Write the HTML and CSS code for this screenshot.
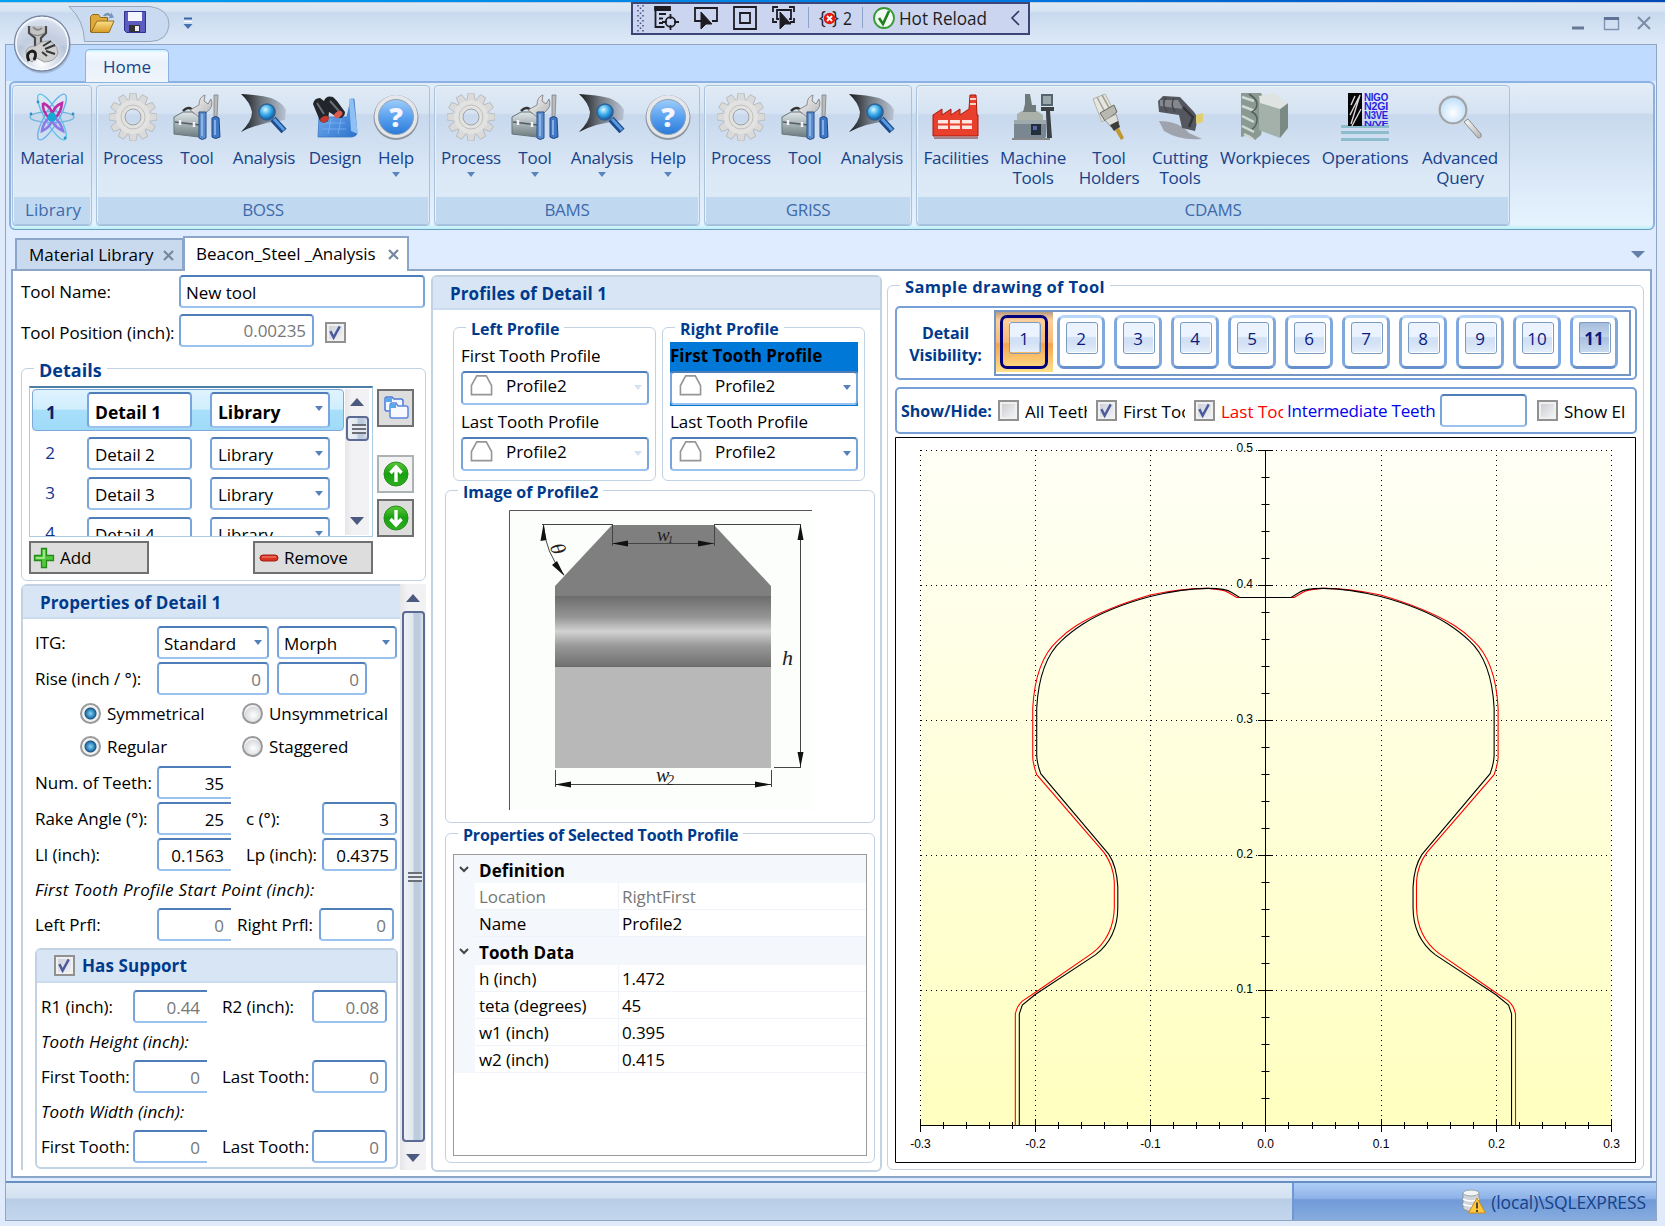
FILE: index.html
```html
<!DOCTYPE html>
<html lang="en">
<head>
<meta charset="utf-8">
<title>Beacon_Steel _Analysis</title>
<link rel="stylesheet" href="styles.css">
</head>
<body>
<svg class="defs" width="0" height="0">
<defs>
<linearGradient id="silver" x1="0" y1="0" x2="1" y2="1"><stop offset="0" stop-color="#fafafa"/><stop offset="1" stop-color="#b4b4b4"/></linearGradient>
<linearGradient id="steel" x1="0" y1="0" x2="0" y2="1"><stop offset="0" stop-color="#dfe6e8"/><stop offset="1" stop-color="#6d7c80"/></linearGradient>
<linearGradient id="blue" x1="0" y1="0" x2="0" y2="1"><stop offset="0" stop-color="#9fccfa"/><stop offset=".5" stop-color="#5ba2f0"/><stop offset="1" stop-color="#2a7ad8"/></linearGradient>
<linearGradient id="horn" x1="0" y1="0" x2="1" y2="0"><stop offset="0" stop-color="#15181c"/><stop offset=".45" stop-color="#6d747c"/><stop offset="1" stop-color="#b9c3d3"/></linearGradient>
<linearGradient id="gold" x1="0" y1="0" x2="0" y2="1"><stop offset="0" stop-color="#fbe08a"/><stop offset="1" stop-color="#d89a26"/></linearGradient>
<linearGradient id="print" x1="0" y1="0" x2="1" y2="1"><stop offset="0" stop-color="#7fb8f4"/><stop offset="1" stop-color="#2c70cc"/></linearGradient>
<radialGradient id="lens" cx=".4" cy=".35" r=".7"><stop offset="0" stop-color="#d8f6ff"/><stop offset=".5" stop-color="#35a8e8"/><stop offset="1" stop-color="#0a4c96"/></radialGradient>
<radialGradient id="glass" cx=".5" cy=".6" r=".6"><stop offset="0" stop-color="#ffffff"/><stop offset="1" stop-color="#b9dcf8"/></radialGradient>
<linearGradient id="green" x1="0" y1="0" x2="0" y2="1"><stop offset="0" stop-color="#5ac83a"/><stop offset=".5" stop-color="#18a010"/><stop offset="1" stop-color="#2fb020"/></linearGradient>
<linearGradient id="band" x1="0" y1="0" x2="0" y2="1"><stop offset="0" stop-color="#6c6c6c"/><stop offset=".3" stop-color="#969696"/><stop offset=".5" stop-color="#d2d2d2"/><stop offset=".7" stop-color="#999"/><stop offset="1" stop-color="#6e6e6e"/></linearGradient>
<linearGradient id="plot" x1="0" y1="0" x2="0" y2="1"><stop offset="0" stop-color="#fffff6"/><stop offset="1" stop-color="#ffffc0"/></linearGradient>
<symbol id="atom" viewBox="0 0 48 48"><g fill="none" stroke-width="1.400"><ellipse cx="24" cy="24" rx="22" ry="5.500" stroke="#6fb7dc"/><ellipse cx="24" cy="24" rx="26" ry="7" transform="rotate(60 24 24)" stroke="#5fc4e6"/><ellipse cx="24" cy="24" rx="26" ry="7" transform="rotate(-60 24 24)" stroke="#6cb2ea"/><path d="M15 10Q24 14 24 22Q26 13 34 10Q33 20 27 25M15 10Q14 18 21 25" stroke="#c02ca8" stroke-width="2.600"/><path d="M21 25Q15 30 14 38Q21 35 24 28Q28 35 35 38Q33 30 27 25" stroke="#8a7ae8" stroke-width="2.600"/></g><circle cx="24" cy="24" r="4.500" fill="#18a6d6"/><g fill="#2e8fc0"><circle cx="3" cy="21" r="1.400"/><circle cx="45" cy="21" r="1.400"/><circle cx="10" cy="9" r="1.400"/><circle cx="37" cy="45" r="1.400"/></g></symbol>
<symbol id="gear" viewBox="0 0 48 48"><g fill="#dadada" stroke="#b0b0b0" stroke-width=".7"><path d="M21 0h6l1.500 10h-9zM21 48h6l1.500-10h-9zM0 21v6l10 1.500v-9zM48 21v6l-10 1.500v-9z"/><path transform="rotate(30 24 24)" d="M21 0h6l1.500 10h-9zM21 48h6l1.500-10h-9zM0 21v6l10 1.500v-9zM48 21v6l-10 1.500v-9z"/><path transform="rotate(60 24 24)" d="M21 0h6l1.500 10h-9zM21 48h6l1.500-10h-9zM0 21v6l10 1.500v-9zM48 21v6l-10 1.500v-9z"/></g><circle cx="24" cy="24" r="12.500" fill="none" stroke="#e2e2e0" stroke-width="9"/><circle cx="24" cy="24" r="8" fill="none" stroke="#a2a2a2" stroke-width="1"/><circle cx="24" cy="24" r="12" fill="none" stroke="#c0c0c0"/></symbol>
<symbol id="tool" viewBox="0 0 48 48"><path d="M1 24l9-5h20v22l-4 3-25-3z" fill="url(#steel)" stroke="#66777a"/><path d="M2 29l25 3" stroke="#4d5d60" stroke-width="1.500"/><path d="M10 18q6-7 12 2" fill="none" stroke="#333" stroke-width="2.500"/><path d="M7 27v5M21 29v5" stroke="#f2f2f2" stroke-width="2.500"/><path d="M17 17l9-5q0-8 6-10l-1 6 4 3 3-5q3 8-4 13l-8 5z" fill="url(#silver)" stroke="#777" stroke-width=".8"/><path d="M26 19h7v26q-4 3-7 0z" fill="#5c8ccc" stroke="#24508e"/><path d="M41 2h4l-1 22h-3z" fill="#bbb" stroke="#777" stroke-width=".7"/><path d="M39 25q4-3 7 0l1 19q-5 3-8 0z" fill="#3f78c4" stroke="#1f4888"/><path d="M29 21v22M42 27v15" stroke="#a4c6f0" stroke-width="1.400"/></symbol>
<symbol id="analysis" viewBox="0 0 48 48"><path d="M1 1Q20 2 31 5Q42 9 46 17L45 27Q18 30 1 39Q12 28 12 19Q10 9 1 1Z" fill="url(#horn)"/><path d="M33 26l11 12" stroke="#1d4a8c" stroke-width="7"/><path d="M34 26l10 11" stroke="#5a9ae0" stroke-width="3"/><circle cx="27" cy="19" r="8" fill="url(#lens)" stroke="#2f5f94" stroke-width="1.500"/></symbol>
<symbol id="design" viewBox="0 0 48 48"><path d="M8 24h28l4-18 3 0 3 34q0 3-5 4H7z" fill="url(#print)" stroke="#3a78c4" stroke-width=".8"/><path d="M38 6l4-1 5 36-7-3z" fill="#8fc0f4"/><path d="M12 30h22M11 36h24M20 26l-3 15M30 26l-3 15" stroke="#77b2f2" stroke-width=".8"/><path d="M2 11q1-6 7-6l4 3q2-6 9-4l4 4 8 11q0 4-4 6l-4-1-8-5-1 9q-4 3-8 0z" fill="#22252a"/><path d="M6 10l7 11M19 8l9 10" stroke="#6a6e75" stroke-width="2"/><ellipse cx="13.500" cy="26" rx="4.500" ry="3" transform="rotate(-25 14 26)" fill="#c43a30"/><ellipse cx="27" cy="21.500" rx="4.500" ry="3" transform="rotate(-35 27 21)" fill="#e05a4c"/></symbol>
<symbol id="help" viewBox="0 0 48 48"><circle cx="24" cy="24.500" r="22.500" fill="#8f969e"/><circle cx="24" cy="23.500" r="21.500" fill="#e4e6ea"/><circle cx="24" cy="24" r="17.500" fill="url(#blue)" stroke="#8fa0b4"/><text x="24" y="33.500" text-anchor="middle" font-family="Open Sans" font-weight="800" font-size="27" fill="#f6f4ff">?</text></symbol>
<symbol id="factory" viewBox="0 0 48 48"><path d="M1 43V22l9-6v6l9-6v6l9-6v6l9-6 1-14h6l1 20h1v21z" fill="#e8402c" stroke="#a8180c"/><path d="M38 6h6M38 11h6" stroke="#fff" stroke-width="1.500"/><g fill="#ffe6e0"><path d="M6 27h10v3.500H6zM18 27h10v3.500H18zM30 27h10v3.500H30zM6 32.500h10V36H6zM18 32.500h10V36H18zM30 32.500h10V36H30z"/></g><path d="M2 45h44" stroke="#7a2820"/></symbol>
<symbol id="machine" viewBox="0 0 48 48"><path d="M5 27h32v17l-4 3H5z" fill="#7b8790"/><path d="M8 21l5-3h15l6 4v6H8z" fill="#a9b1a9"/><path d="M16 1h5l2 11h4v7H14l2-8z" fill="#6f7a7a"/><path d="M33 2h10v10H33z" fill="#9aa7ac" stroke="#56646c" stroke-width="2"/><path d="M32 14h13v4H32zM37 18h4l2 27h-5z" fill="#3c4146"/><path d="M22 31h10v11H22z" fill="#23303c"/><path d="M24 33h4v4h-4z" fill="#56a"/><path d="M5 27h32v4H5z" fill="#9ea9ae"/><path d="M3 45h38v2H3z" fill="#888"/></symbol>
<symbol id="holder" viewBox="0 0 48 48"><path d="M8 6l12-5 10 19-13 9z" fill="#e6e6e0" stroke="#b4b4aa"/><path d="M12 4l10 19M17 2l10 18" stroke="#a4a49c" stroke-width="1.600"/><path d="M15 20l14-8 3 7-12 9z" fill="#b8b8b0" stroke="#66665f"/><path d="M20 27l11-6 3 9-8 4z" fill="#dededa" stroke="#999"/><path d="M25 32l8-4 2 6-6 4z" fill="#3c3c3a"/><path d="M30 37l4-2 5 10-3 2z" fill="#c09830"/></symbol>
<symbol id="cutting" viewBox="0 0 48 48"><path d="M3 28q20 0 30 12l13 6q-22 2-38-8z" fill="#9ea3ae"/><path d="M2 8l5-5 17 1 14 15 4 6-3 13-13-3-3-13-20-3z" fill="#55575e"/><path d="M4 7l18 0 5 9-23-3z" fill="#85878e"/><path d="M10 4q-5 8 1 14M18 5q-4 7 1 14" stroke="#45474c" fill="none" stroke-width="1.500"/><path d="M27 14l10 10-4 10" stroke="#34363a" fill="none" stroke-width="2.500"/><path d="M40 22l7-2v9l-7 2z" fill="#e0cf72"/></symbol>
<symbol id="work" viewBox="0 0 48 48"><path d="M0 0h20l6 10-6 32-6 5-6-5-8 2z" fill="#8a9a92"/><path d="M18 6L47 10l-8 6v29l-21-8z" fill="#a3b1aa"/><path d="M39 16l8-6v25l-8 10z" fill="#7b8b83"/><path d="M18 3L32 0l15 10-8 6-20-6z" fill="#dfe4e2"/><path d="M1 4l12 4M1 13l13 5M1 23l12 6M1 33l12 6M3 41l9 5" stroke="#d0dad4" stroke-width="2.500"/><path d="M8 1q8 5 8 10t-5 8q6 3 5 9t-5 8" stroke="#52615a" stroke-width="1.500" fill="none"/></symbol>
<symbol id="ops" viewBox="0 0 48 48"><path d="M0 32h48v3H0zM0 38h48v3H0zM0 45h48v3H0z" fill="#8dbccc"/><path d="M7 0h14v33H7z" fill="#050505"/><path d="M10 31L19 2M9 22l9-18M11 33l9-17M10 12l4-9" stroke="#d8d8d8" stroke-width="1.400"/><g font-family="Liberation Sans" font-weight="700" font-size="10" fill="#2a20e0"><text x="23" y="7.500" textLength="24" lengthAdjust="spacingAndGlyphs">NIGO</text><text x="23" y="16.500" textLength="24" lengthAdjust="spacingAndGlyphs">N2GI</text><text x="23" y="25.500" textLength="24" lengthAdjust="spacingAndGlyphs">N3VE</text><text x="23" y="33" textLength="24" lengthAdjust="spacingAndGlyphs" font-size="8">N/VF</text></g></symbol>
<symbol id="query" viewBox="0 0 48 48"><path d="M28 29l4-3 13 15q1 4-3 4z" fill="url(#silver)" stroke="#8b8b8b"/><circle cx="17" cy="17" r="13.500" fill="url(#glass)" stroke="#9fa3a8" stroke-width="2.400"/><circle cx="17" cy="17" r="15" fill="none" stroke="#d9dbde"/></symbol>
<symbol id="tooth" viewBox="0 0 24 24"><path d="M1.500 21.500V12L7 2h10l5.500 10v9.500z" fill="#fff" stroke="#969696" stroke-width="1.700"/></symbol>
<symbol id="tick" viewBox="0 0 16 16"><path d="M2.500 6.500L6 13.500 12.500 1.500" fill="none" stroke="#4a5a9c" stroke-width="2.600"/></symbol>
</defs>
</svg>

<div class="window">
  <header class="titlebar">
    <svg class="orb-area" width="210" height="75" viewBox="0 0 210 75">
      <defs><radialGradient id="orb" cx=".5" cy=".85" r=".8"><stop offset="0" stop-color="#fff"/><stop offset=".6" stop-color="#b8c4d8"/><stop offset="1" stop-color="#e6ecf6"/></radialGradient></defs>
      <path d="M69 6.500H150Q169 9 169 24.500Q168 41 150 41.500H84.500Q84 20 69 6.500Z" fill="#cadbf1" stroke="#97a7bf"/>
      <path d="M90.500 32V16.500l2-2h6l2 3h7v5" fill="#e0a93a" stroke="#8e6c1c"/><path d="M91 32.500l6-11.500h17l-5 11.500z" fill="url(#gold)" stroke="#94701c"/><path d="M103 15.500q4-5 8-1v-2.500l3 5.500-6 1 2-2q-3-2-5 0" fill="#7a94b8"/>
      <path d="M124.500 11.500h21v21h-19l-2-2z" fill="#5c5cc0" stroke="#30308c"/><path d="M128 12h14v9h-14z" fill="#f4f6ff"/><path d="M129 25h11v7h-11z" fill="#333"/><path d="M135 26h4v5h-4z" fill="#eee"/>
      <path d="M184 18.500h8" stroke="#3d66a6" stroke-width="2"/><path d="M184 21.500h8" stroke="#fff"/><path d="M183.500 24h9l-4.500 5z" fill="#4772b2"/>
      <circle cx="42.500" cy="45" r="28.500" fill="#8d9bb0" opacity=".55"/><circle cx="42" cy="43.500" r="27.500" fill="url(#orb)" stroke="#7a88a2" stroke-width="1.300"/><circle cx="42" cy="43.500" r="26" fill="none" stroke="#f4f8ff" stroke-width="1.500"/><path d="M17 45a25 25 0 0 1 50 0q-25 6-50 0z" fill="#ccd6e6" opacity=".5"/>
      <path d="M28 26h19v7l-5 6v8h-6v-8l-7-6z" fill="#c4c4c4"/><path d="M29 26v7l6 5v9M46 26v7l-5 5v8" fill="none" stroke="#4a4a4c" stroke-width="2.200"/><path d="M33 27q4 5 9 1" fill="none" stroke="#8a8a8a" stroke-width="2"/><path d="M30 33q7 5 15 0" fill="none" stroke="#777"/>
      <path d="M26 51q2-5 10-5 4-5 13-5 8 3 9 12-3 9-14 9l-7-4-5 4-5-3z" fill="#cfcfce" stroke="#8f9094" stroke-width=".8"/><path d="M43 46l8-5M45 49l10-4M46 51l9 3M42 52l5 4" stroke="#34363a" stroke-width="2"/>
      <path d="M29 61q-4-8 3-10 6 1 2 9" fill="none" stroke="#1c1c1c" stroke-width="2.800"/>
    </svg>
    <div class="debugbar">
      <svg width="399" height="33" viewBox="0 0 399 33">
        <g stroke="#47507f" stroke-width="1.500" stroke-dasharray="1.500 3.500"><path d="M7 3v27"/><path d="M9.500 5.500v24"/><path d="M12 3v27"/></g>
        <g fill="none" stroke="#1c1c22" stroke-width="1.800"><path d="M24.500 9v16h9"/><path d="M24 5h15v3H24z" fill="#1c1c22"/><path d="M28 12h7M28 16.500h4M28 21h4"/><circle cx="39.500" cy="20" r="4.800"/><path d="M39.500 12v5M39.500 23v5M31 20h5M43 20h5"/>
        <path d="M70 19h-6V6h22v13h-5"/><path d="M70 10v17l5-5h6z" fill="#1c1c22" stroke-width="1"/>
        <path d="M103 5h22v22h-22z"/><path d="M109 11h10v10h-10z"/>
        <path d="M142 10V5h5M158 5h5v5M142 16v4h4M163 16v4h-4M148 17h-2V8h14v9h-2"/><path d="M149 10v17l5-5h6z" fill="#1c1c22" stroke-width="1"/></g>
        <path d="M177.500 5v21M231.500 5v21" stroke="#8fa2cc"/>
        <text x="188" y="22" font-family="Open Sans" font-size="18" fill="#222">{</text><text x="201" y="22" font-family="Open Sans" font-size="18" fill="#222">}</text>
        <circle cx="198.500" cy="16.500" r="5.800" fill="#e01b10"/><path d="M196 14l5 5M201 14l-5 5" stroke="#fff" stroke-width="1.800"/>
        <circle cx="253" cy="16" r="10" fill="#f4fbf2" stroke="#379a35" stroke-width="1.800"/><path d="M248 16l4 6 6-13" fill="none" stroke="#1d7f1d" stroke-width="2.600"/>
        <path d="M388 9l-7 7 7 7" fill="none" stroke="#333b66" stroke-width="1.600"/>
        <g font-family="Open Sans" font-size="17.500" fill="#1e1e1e"><text x="212" y="22.500" textLength="9" lengthAdjust="spacingAndGlyphs">2</text><text x="268" y="22.500" textLength="88" lengthAdjust="spacingAndGlyphs">Hot Reload</text></g>
      </svg>
    </div>
    <svg class="winbtns" width="84" height="16" viewBox="0 0 84 16"><path d="M3 12h12" stroke="#667a98" stroke-width="3"/><path d="M35.500 2h14v11.500h-14z" fill="none" stroke="#8194b2" stroke-width="1.400"/><path d="M35 2.500h15" stroke="#5f7494" stroke-width="3"/><path d="M69 1l12 12M81 1L69 13" stroke="#7c8aa4" stroke-width="2"/></svg>
  </header>

  <div class="frame">
    <div class="tabstrip"><div class="hometab">Home</div></div>
    <div class="ribbon">
      <section class="rgroup g1"><div class="items"><div class="item w76"><svg><use href="#atom"/></svg>Material</div></div><footer>Library</footer></section>
      <section class="rgroup g2"><div class="items"><div class="item w66"><svg><use href="#gear"/></svg>Process</div><div class="item w62"><svg><use href="#tool"/></svg>Tool</div><div class="item w72"><svg><use href="#analysis"/></svg>Analysis</div><div class="item w70"><svg><use href="#design"/></svg>Design</div><div class="item w52"><svg><use href="#help"/></svg>Help<i></i></div></div><footer>BOSS</footer></section>
      <section class="rgroup g3"><div class="items"><div class="item w66"><svg><use href="#gear"/></svg>Process<i></i></div><div class="item w62"><svg><use href="#tool"/></svg>Tool<i></i></div><div class="item w72"><svg><use href="#analysis"/></svg>Analysis<i></i></div><div class="item w60"><svg><use href="#help"/></svg>Help<i></i></div></div><footer>BAMS</footer></section>
      <section class="rgroup g4"><div class="items"><div class="item w66"><svg><use href="#gear"/></svg>Process</div><div class="item w62"><svg><use href="#tool"/></svg>Tool</div><div class="item w72"><svg><use href="#analysis"/></svg>Analysis</div></div><footer>GRISS</footer></section>
      <section class="rgroup g5"><div class="items"><div class="item w74"><svg><use href="#factory"/></svg>Facilities</div><div class="item w80"><svg><use href="#machine"/></svg>Machine<br>Tools</div><div class="item w72"><svg><use href="#holder"/></svg>Tool<br>Holders</div><div class="item w70"><svg><use href="#cutting"/></svg>Cutting<br>Tools</div><div class="item w100"><svg><use href="#work"/></svg>Workpieces</div><div class="item w100"><svg><use href="#ops"/></svg>Operations</div><div class="item w90"><svg><use href="#query"/></svg>Advanced<br>Query</div></div><footer>CDAMS</footer></section>
    </div>

    <div class="doctabs">
      <div class="doctab">Material Library<svg width="12" height="12"><path d="M1 1l9 9M10 1l-9 9" stroke="#74889f" stroke-width="2.200"/></svg></div>
      <div class="doctab active">Beacon_Steel _Analysis<svg width="12" height="12"><path d="M1 1l9 9M10 1l-9 9" stroke="#74889f" stroke-width="2.200"/></svg></div>
      <span class="tabmenu"></span>
    </div>

    <main class="doc">
      <div class="left">
        <div class="row top"><label class="l158">Tool Name:</label><div class="field w246 txt">New tool</div></div>
        <div class="row pos"><label class="l158">Tool Position (inch):</label><div class="field w135 off up">0.00235</div><span class="check gap11"><svg><use href="#tick"/></svg></span></div>

        <section class="box details"><h3 class="cap capbig">Details</h3>
          <div class="detailgrid">
            <div class="list">
              <div class="rows">
                <div class="lrow sel"><span>1</span><div class="field txt w105">Detail 1</div><div class="field txt combo w120">Library</div></div>
                <div class="lrow"><span>2</span><div class="field txt w105">Detail 2</div><div class="field txt combo w120">Library</div></div>
                <div class="lrow"><span>3</span><div class="field txt w105">Detail 3</div><div class="field txt combo w120">Library</div></div>
                <div class="lrow"><span>4</span><div class="field txt w105">Detail 4</div><div class="field txt combo w120">Library</div></div>
              </div>
              <div class="vbar"><b class="up"></b><div class="thumb small"></div><b class="down"></b></div>
            </div>
            <div class="side">
              <div class="btn sq"><svg width="26" height="24" viewBox="0 0 26 24"><path d="M2 3q0-2 2-2h5l2 2h7q2 0 2 2v10H4q-2 0-2-2z" fill="#f3f7ff" stroke="#4a78d8" stroke-width="1.500"/><path d="M7 10q0-3 2-3h4l2 3h8q2 0 2 2v8q0 2-2 2H9q-2 0-2-2z" fill="#f6f9ff" stroke="#5c86e0" stroke-width="1.500"/><path d="M2 2h7v4H2zM7 8h6v4H7z" fill="#58a8ec"/></svg></div>
              <div class="btn sq light mt28"><svg width="26" height="26" viewBox="0 0 26 26"><circle cx="13" cy="13" r="12" fill="url(#green)" stroke="#2a8c1c"/><path d="M13 21V7M7.500 12L13 6l5.500 6" fill="none" stroke="#fff" stroke-width="3.400"/></svg></div>
              <div class="btn sq mt6"><svg width="26" height="26" viewBox="0 0 26 26"><circle cx="13" cy="13" r="12" fill="url(#green)" stroke="#2a8c1c"/><path d="M13 5v14M7.500 14l5.500 6 5.500-6" fill="none" stroke="#fff" stroke-width="3.400"/></svg></div>
            </div>
          </div>
          <div class="actions">
            <div class="btn act"><svg width="22" height="22" viewBox="0 0 22 22"><path d="M8.500 1.500h5v7h7v5h-7v7h-5v-7h-7v-5h7z" fill="#52c93c" stroke="#248a18" stroke-width="1.300"/><path d="M11 3v8H3" stroke="#b4f0a0" fill="none" stroke-width="1.500"/></svg>Add</div>
            <div class="btn act rem"><svg width="20" height="22" viewBox="0 0 20 22"><rect x="1" y="8" width="18" height="6" rx="3" fill="#d93420" stroke="#a41c10"/><path d="M3 10h14" stroke="#f59080"/></svg>Remove</div>
          </div>
        </section>

        <div class="propwrap">
          <section class="props">
            <h2 class="head">Properties of Detail 1</h2>
            <div class="form">
              <div class="row"><label class="l122">ITG:</label><div class="field txt combo w112">Standard</div><div class="field txt combo w120 gap8">Morph</div></div>
              <div class="row"><label class="l122">Rise (inch / °):</label><div class="field off w112">0</div><div class="field off w90 gap8">0</div></div>
              <div class="radios"><span class="radio on"></span><label>Symmetrical</label><span class="radio"></span><label>Unsymmetrical</label></div>
              <div class="radios r2"><span class="radio on"></span><label>Regular</label><span class="radio"></span><label>Staggered</label></div>
              <div class="row"><label class="l122">Num. of Teeth:</label><div class="field cut w74">35</div></div>
              <div class="row"><label class="l122">Rake Angle (°):</label><div class="field cut w74">25</div><label class="l76 gap15">c (°):</label><div class="field w75">3</div></div>
              <div class="row"><label class="l122">Ll (inch):</label><div class="field cut w74">0.1563</div><label class="l76 gap15">Lp (inch):</label><div class="field w75">0.4375</div></div>
              <div class="note n1">First Tooth Profile Start Point (inch):</div>
              <div class="row"><label class="l122">Left Prfl:</label><div class="field off cut w74">0</div><label class="l82 gap6">Right Prfl:</label><div class="field off w75">0</div></div>
            </div>
            <section class="support">
              <h2 class="head"><span class="check"><svg><use href="#tick"/></svg></span>Has Support</h2>
              <div class="form">
                <div class="row"><label class="l92">R1 (inch):</label><div class="field off cut w74">0.44</div><label class="l90 gap15">R2 (inch):</label><div class="field off w75">0.08</div></div>
                <div class="note">Tooth Height (inch):</div>
                <div class="row"><label class="l92">First Tooth:</label><div class="field off cut w74">0</div><label class="l90 gap15">Last Tooth:</label><div class="field off w75">0</div></div>
                <div class="note">Tooth Width (inch):</div>
                <div class="row"><label class="l92">First Tooth:</label><div class="field off cut w74">0</div><label class="l90 gap15">Last Tooth:</label><div class="field off w75">0</div></div>
              </div>
            </section>
          </section>
          <div class="vbar tall"><b class="up"></b><div class="thumb"></div><b class="down"></b></div>
        </div>
      </div>

      <section class="middle">
        <h2 class="head">Profiles of Detail 1</h2>
        <div class="pair">
          <section class="box prof"><h3 class="cap">Left Profile</h3>
            <div class="plabel">First Tooth Profile</div><div class="field txt combo dis pick"><svg><use href="#tooth"/></svg>Profile2</div>
            <div class="plabel p2">Last Tooth Profile</div><div class="field txt combo dis pick"><svg><use href="#tooth"/></svg>Profile2</div>
          </section>
          <section class="box prof"><h3 class="cap">Right Profile</h3>
            <div class="hot"><div class="plabel">First Tooth Profile</div><div class="field txt combo pick"><svg><use href="#tooth"/></svg>Profile2</div></div>
            <div class="plabel p2">Last Tooth Profile</div><div class="field txt combo pick"><svg><use href="#tooth"/></svg>Profile2</div>
          </section>
        </div>
        <section class="box image"><h3 class="cap">Image of Profile2</h3>
          <svg width="303" height="300" viewBox="0 0 303 300">
            <path d="M0 0h303v300H0z" fill="#fcfefb"/><path d="M.5 300V.5H303" fill="none" stroke="#555"/>
            <path d="M46 240V76L103 15h102l57 61v165z" fill="#7f7f7f"/><path d="M46 86h216v71H46z" fill="url(#band)"/><path d="M46 157h216v101H46z" fill="#b8b8b8"/><path d="M46 156.500h216" stroke="#6a6a6a"/>
            <g stroke="#444" fill="none"><path d="M33 14.500h70M205 14.500h87M103.500 14v22M205.500 14v22M103 33.500h102M291.500 15v242M265 257.500h27M46.500 260v17M262.500 260v17M46 274.500h216M34.500 15Q36 42 55 65"/></g>
            <g fill="#111"><path d="M103 33.500l16-3v6zM205 33.500l-16-3v6zM291.500 14l-3 16h6zM291.500 257l-3-15h6zM46 274.500l16-3v6zM262 274.500l-16-3v6zM34.500 14l-3 17 6-1zM55.500 66L43 55l5-4z"/></g>
            <g font-family="Liberation Serif" font-style="italic" fill="#222"><text x="148" y="31" font-size="19">w</text><text x="159" y="33" font-size="10">1</text><text x="147" y="272" font-size="20">w</text><text x="158" y="275" font-size="14">2</text><text x="273" y="155" font-size="22">h</text><text transform="translate(48 39) rotate(68)" text-anchor="middle" x="0" y="6" font-size="21">θ</text></g>
          </svg>
        </section>
        <section class="box toothprops"><h3 class="cap capnarrow">Properties of Selected Tooth Profile</h3>
          <div class="pgrid">
            <div class="cat"><svg width="10" height="7"><path d="M1 1l4 4 4-4" fill="none" stroke="#444" stroke-width="2"/></svg>Definition</div>
            <div class="prow faded"><span>Location</span><span>RightFirst</span></div>
            <div class="prow tint"><span>Name</span><span>Profile2</span></div>
            <div class="cat"><svg width="10" height="7"><path d="M1 1l4 4 4-4" fill="none" stroke="#444" stroke-width="2"/></svg>Tooth Data</div>
            <div class="prow"><span>h (inch)</span><span>1.472</span></div>
            <div class="prow"><span>teta (degrees)</span><span>45</span></div>
            <div class="prow"><span>w1 (inch)</span><span>0.395</span></div>
            <div class="prow"><span>w2 (inch)</span><span>0.415</span></div>
          </div>
        </section>
      </section>

      <section class="box right"><h3 class="cap">Sample drawing of Tool</h3>
        <div class="vis"><strong>Detail<br>Visibility:</strong>
          <div class="nums"><div class="num cur"><b>1</b></div><div class="num"><b>2</b></div><div class="num"><b>3</b></div><div class="num"><b>4</b></div><div class="num"><b>5</b></div><div class="num"><b>6</b></div><div class="num"><b>7</b></div><div class="num"><b>8</b></div><div class="num"><b>9</b></div><div class="num"><b>10</b></div><div class="num last"><b>11</b></div></div>
        </div>
        <div class="show"><strong>Show/Hide:</strong><span class="check empty"></span><em>All Teeth</em><span class="check"><svg><use href="#tick"/></svg></span><em>First Tooth</em><span class="check"><svg><use href="#tick"/></svg></span><em class="red">Last Tooth</em><span class="inter">Intermediate Teeth</span><div class="field w87"></div><span class="check empty gap10"></span><em>Show Elements</em></div>
        <svg class="chart" width="741" height="726" viewBox="0 0 741 726">
          <path d="M.5.5h740v725H.5z" fill="#fff" stroke="#000"/>
          <path d="M25.500 13.500h691v675h-691z" fill="url(#plot)"/>
          <g stroke="#000" stroke-dasharray="1 4" fill="none" shape-rendering="crispEdges"><path d="M25.500 13.500H716M25.500 148.500H716M25.500 283.500H716M25.500 418.500H716M25.500 553.500H716M25.500 13V688M140.500 13V688M255.500 13V688M486.500 13V688M601.500 13V688M716.500 13V688"/></g>
          <g fill="#fffff6"><path d="M340 8h19v12h-19z"/><path d="M340 143h19v11h-19z" fill="#ffffea"/><path d="M340 278h19v11h-19z" fill="#ffffe0"/><path d="M340 413h19v11h-19z" fill="#ffffd5"/><path d="M340 548h19v11h-19z" fill="#ffffcb"/></g>
          <g stroke="#000" fill="none"><path d="M370.500 13V688M25.500 688.500H716.500"/>
          <path d="M363 13.500h15M363 148.500h15M363 283.500h15M363 418.500h15M363 553.500h15M366.500 40.500h8M366.500 67.500h8M366.500 94.500h8M366.500 121.500h8M366.500 175.500h8M366.500 202.500h8M366.500 229.500h8M366.500 256.500h8M366.500 310.500h8M366.500 337.500h8M366.500 364.500h8M366.500 391.500h8M366.500 445.500h8M366.500 472.500h8M366.500 499.500h8M366.500 526.500h8M366.500 580.500h8M366.500 607.500h8M366.500 634.500h8M366.500 661.500h8"/>
          <path d="M25.500 682v13M140.500 682v13M255.500 682v13M370.500 682v13M486.500 682v13M601.500 682v13M716.500 682v13M48.500 685v7M71.500 685v7M94.500 685v7M117.500 685v7M163.500 685v7M186.500 685v7M209.500 685v7M232.500 685v7M278.500 685v7M301.500 685v7M324.500 685v7M347.500 685v7M393.500 685v7M417.500 685v7M440.500 685v7M463.500 685v7M509.500 685v7M532.500 685v7M555.500 685v7M578.500 685v7M624.500 685v7M647.500 685v7M670.500 685v7M693.500 685v7"/></g>
          <g transform="translate(-10 -7) scale(.49745 .50766)" fill="none" class="curve">
            <path stroke="#f00" d="M262 1370V1150Q265 1135 276 1125L302 1108L416 1031Q460 998 461 940V890Q459 857 440 832L305 679Q298 660 297 645V548Q302 455 347 415Q365 397 385 385Q440 352 533 325Q600 311 650 312Q680 314 690 320L707 330H765"/>
            <path stroke="#000" d="M270 1370V1150L276 1133L302 1112L423 1034Q468 1000 468 940V900Q466 860 450 836L313 677Q305 655 305 640V548Q310 455 355 415Q370 400 398 382Q450 350 533 328Q600 312 650 312Q685 312 697 320L713 330H765"/>
            <g transform="translate(1529.500 0) scale(-1 1)"><path stroke="#f00" d="M262 1370V1150Q265 1135 276 1125L302 1108L416 1031Q460 998 461 940V890Q459 857 440 832L305 679Q298 660 297 645V548Q302 455 347 415Q365 397 385 385Q440 352 533 325Q600 311 650 312Q680 314 690 320L707 330H765"/>
            <path stroke="#000" d="M270 1370V1150L276 1133L302 1112L423 1034Q468 1000 468 940V900Q466 860 450 836L313 677Q305 655 305 640V548Q310 455 355 415Q370 400 398 382Q450 350 533 328Q600 312 650 312Q685 312 697 320L713 330H765"/></g>
          </g>
          <g font-family="Liberation Sans" font-size="12" fill="#000"><g text-anchor="end"><text x="358" y="15">0.5</text><text x="358" y="151">0.4</text><text x="358" y="286">0.3</text><text x="358" y="421">0.2</text><text x="358" y="556">0.1</text></g><g text-anchor="middle"><text x="25.500" y="711">-0.3</text><text x="140.500" y="711">-0.2</text><text x="255.500" y="711">-0.1</text><text x="370.500" y="711">0.0</text><text x="486" y="711">0.1</text><text x="601.500" y="711">0.2</text><text x="716.500" y="711">0.3</text></g></g>
        </svg>
      </section>
    </main>

    <footer class="status"><div class="server"><svg width="26" height="26" viewBox="0 0 26 26"><path d="M2 4v16q8 5 16 0V4z" fill="#cfd4da" stroke="#8b939c"/><ellipse cx="10" cy="4" rx="8" ry="3" fill="#f2f4f6" stroke="#9aa"/><path d="M2 10q8 4 16 0M2 15q8 4 16 0" fill="none" stroke="#fff" stroke-width="1.500"/><path d="M16 9l8.500 15h-17z" fill="#ffc83c" stroke="#c88a1c"/><path d="M16 13.500v6M16 21v2" stroke="#543" stroke-width="2"/></svg><span>(local)\SQLEXPRESS</span></div></footer>
  </div>
</div>
</body>
</html>
```
FILE: styles.css
```css
* { box-sizing: border-box; }
body { margin: 0; font-family: "Open Sans", "Noto Sans", sans-serif; font-size: 17px; font-stretch: 92%; letter-spacing: -.05px; color: #000; line-height: 20px; white-space: nowrap; }
h2, h3 { margin: 0; font-size: 17px; color: #003a8c; font-weight: 700; letter-spacing: 0; }
em { font-style: normal; }
.defs { position: absolute; }
.window { width: 1665px; height: 1226px; overflow: hidden; background: #dfeafb; display: flex; flex-direction: column; }
.titlebar { height: 44px; position: relative; display: flex; justify-content: space-between; border-top: 2px solid #0078e0; border-image: linear-gradient(90deg, #00a2f4, #0078e0 60%, #0048b8) 2; background: linear-gradient(#9db0c4 0, #dde9f5 1px, #d7e4f2 9px, #c9daee 11px, #dce8f7 40px); }
.orb-area { position: absolute; left: 0; top: 0; z-index: 3; margin-top: -2px; }
.debugbar { margin: 0 0 0 631px; width: 399px; height: 33px; background: #ccd5f0; box-shadow: inset 0 0 0 2px #3d4576; }
.winbtns { margin: 14px 12px 0 0; }
.frame { margin: 0 8px 0 5px; width: 1652px; height: 1177px; border: 1px solid #91a5c0; display: flex; flex-direction: column; background: #dfecff; }
.tabstrip { height: 36px; background: #bfdbff; padding: 4px 0 0 79px; }
.hometab { width: 84px; height: 33px; border: 1px solid #8db2e3; border-bottom: 0; border-radius: 5px 5px 0 0; background: linear-gradient(#c8f4fc 0, #f4faff 3px, #eaf1fa 12px, #f0f5fb); color: #15428b; text-align: center; line-height: 34px; position: relative; z-index: 2; }
.ribbon { margin: 0 1px 0 3px; height: 149px; border: 2px solid #8cb2e4; border-bottom: 1px solid #6f9bc0; border-radius: 6px; padding: 2px 0 0 1px; display: flex; background: linear-gradient(#e3edf8 0, #d7e4f3 30px, #c8d9ed 31px, #dfecfa 110px, #e4f3fe 142px, #b6f2f6); }
.rgroup { height: 140px; border: 1px solid #a9c3dd; border-radius: 4px; margin-right: 4px; display: flex; flex-direction: column; box-shadow: inset 1px 1px #e8f2fa, 0 1px #9fbfdf; background: linear-gradient(#e0eaf5 0, #d5e3f2 27px, #c8d8ed 29px, #dbe8f6 90px, #deebf8); color: #15428b; }
.rgroup footer { height: 27px; background: #c1d8f1; text-align: center; color: #3e6aaa; line-height: 25px; margin: 0 1px; letter-spacing: -.3px; }
.g1 footer { letter-spacing: .1px; padding-left: 2px; }
.items { height: 111px; display: flex; padding: 7px 0 0 3px; }
.g1 .items { padding-left: 1px; }
.item { text-align: center; letter-spacing: -.2px; }
.item svg { display: block; width: 48px; height: 48px; margin: 0 auto 7px; }
.item i { display: block; border: 4px solid transparent; border-top: 5px solid #5b83bd; width: 0; margin: 4px auto 0; }
.g1 { width: 80px; } .g2 { width: 334px; } .g3 { width: 266px; } .g4 { width: 208px; } .g5 { width: 594px; }
.g5 .items { padding-left: 2px; }
.w52 { width: 52px; } .w60 { width: 60px; } .w62 { width: 62px; } .w66 { width: 66px; } .w70 { width: 70px; } .w72 { width: 72px; } .w74 { width: 74px; } .w75 { width: 75px; } .w76 { width: 76px; } .w80 { width: 80px; } .w87 { width: 87px; } .w90 { width: 90px; } .w100 { width: 100px; } .w105 { width: 105px; } .w112 { width: 112px; } .w120 { width: 120px; } .w135 { width: 135px; } .w246 { width: 246px; }
.l76 { width: 76px; } .l82 { width: 82px; } .l90 { width: 90px; } .l92 { width: 92px; } .l122 { width: 122px; } .l158 { width: 158px; }
.gap6 { margin-left: 6px; } .gap8 { margin-left: 8px; } .gap10 { margin-left: 10px; } .gap11 { margin-left: 11px; } .gap15 { margin-left: 15px; }
.doctabs { height: 39px; padding: 7px 0 0 9px; display: flex; align-items: flex-end; }
.doctab { height: 31px; width: 169px; border: 2px solid #8ba6c9; border-bottom: 0; background: #c9daef; padding: 4px 0 0 12px; display: flex; line-height: 22px; }
.doctab svg { margin: 6px 7px 0 auto; }
.doctab.active { width: 226px; height: 35px; background: #fff; margin: 0 0 -2px -1px; position: relative; padding: 5px 0 0 11px; }
.tabmenu { margin: 0 11px 11px auto; border: 7px solid transparent; border-top: 7px solid #6480a8; border-bottom: 0; }
.doc { margin: 0 4px 0 5px; height: 909px; border: 2px solid #8ba6c9; background: #fff; display: flex; }
.left { padding: 4px 0 0 8px; width: 418px; }
.row { height: 33px; margin-bottom: 3px; display: flex; align-items: center; }
.row.top { margin-bottom: 6px; }
.row.pos label { padding-top: 4px; }
.row.pos .check { margin-top: 3px; }
.field { height: 33px; border: 2px solid #7ba6dc; border-color: #4f7db8 #78a5e0 #9cc2ee #78a5e0; border-radius: 4px; background: #fff; text-align: right; line-height: 31px; padding: 0 6px; flex: none; }
.field.txt { text-align: left; padding-left: 5px; }
.field.off { color: #777; }
.field.up { line-height: 29px; }
.field.cut { border-right: 0; border-radius: 4px 0 0 4px; padding-right: 7px; }
.combo { position: relative; }
.combo::after { content: ""; position: absolute; right: 5px; top: 12px; border: 4.500px solid transparent; border-top: 5px solid #5480bc; border-bottom: 0; }
.combo.dis::after { border-top-color: #d5e2f0; }
.check { width: 21px; height: 21px; flex: none; border: 2px solid #919191; background: linear-gradient(135deg, #c8ccd4, #f6f6f8); box-shadow: inset 0 0 0 2px #f0f0f0; display: flex; align-items: center; justify-content: center; }
.check svg { width: 15px; height: 15px; }
.box { border: 1.500px solid #c2d2e3; border-radius: 6px; position: relative; }
.cap { position: absolute; top: -9px; left: 12px; background: #fff; padding: 0 5px; line-height: 20px; font-size: 16px; }
.capbig { font-size: 18px; top: -9px; }
.capnarrow { letter-spacing: -.2px; }
.details { width: 405px; height: 213px; margin-top: 21px; padding: 17px 0 0 7px; }
.detailgrid { display: flex; }
.list { width: 344px; height: 151px; border: 1px solid #a9cbe4; border-top: 2px solid #4d7fa6; display: flex; padding: 1px; }
.rows { flex: 1; overflow: hidden; height: 147px; }
.lrow { display: flex; height: 40px; align-items: center; color: #15428b; margin-left: 1px; }
.lrow span { width: 34px; flex: none; text-align: center; margin-right: 21px; padding-left: 2px; color: #14348c; }
.lrow .field { margin-right: 18px; color: #000; padding-left: 6px; }
.lrow.sel { height: 42px; width: 312px; border: 1px solid #7fa8d8; border-radius: 4px; background: linear-gradient(#dff3fe 0, #d0eefd 48%, #a8dffa 50%, #9fdbf9); font-weight: 700; margin-bottom: 2px; font-size: 17.500px; }
.lrow.sel span { color: #0a2070; margin-right: 20px; padding-top: 3px; }
.lrow.sel .field { height: 36px; line-height: 37px; }
.vbar { width: 24px; flex: none; background: linear-gradient(90deg, #e6e6ea, #f2f2f4 30%); display: flex; flex-direction: column; align-items: center; padding: 9px 0 10px; margin-right: 2px; }
.vbar b { border: 7px solid transparent; border-top: 0; border-bottom: 8px solid #4d5a80; }
.vbar b.down { border-top: 8px solid #4d5a80; border-bottom: 0; margin-top: auto; }
.thumb { width: 23px; border: 2px solid #5c6b94; border-radius: 4px; flex: 1; margin: 7px 0 12px; background: repeating-linear-gradient(#6b7078 0 2px, #e8ecf2 2px 4px) 4px center / 14px 10px no-repeat, linear-gradient(90deg, #eef2f7 0, #e0e7ef 45%, #bccbde 55%, #bccbde 80%, #dce5ef); }
.thumb.small { flex: none; height: 25px; margin: 10px 0 0; }
.side { margin-left: 4px; padding-top: 3px; }
.btn { background: #dddddd; border: 2px solid #707070; display: flex; align-items: center; }
.sq { width: 37px; height: 38px; justify-content: center; }
.sq.light { background: #f2f2f2; border-color: #adb2b5; }
.mt28 { margin-top: 28px; } .mt6 { margin-top: 6px; }
.actions { display: flex; justify-content: space-between; width: 344px; margin-top: 4px; }
.act { width: 120px; height: 33px; padding-left: 2px; gap: 5px; }
.act.rem { padding-left: 4px; }
.propwrap { display: flex; margin-top: 3px; height: 586px; }
.props { width: 379px; border: solid #c2d2e3; border-width: 2px 0 0 2px; border-radius: 6px 0 0 0; }
.head { height: 33px; background: #d8e5f4; border-bottom: 2px solid #cbdcee; line-height: 33px; padding-left: 17px; letter-spacing: .1px; }
.form { padding: 7px 0 0 12px; }
.radios { height: 30px; display: flex; align-items: center; margin: 3px 0 0 45px; }
.radios label { width: 135px; flex: none; margin-left: 6px; padding-top: 2px; }
.radios.r2 { margin-bottom: 5px; }
.radio { width: 21px; height: 21px; flex: none; border-radius: 50%; border: 2px solid #9a9a9a; background: radial-gradient(circle at 55% 60%, #fff, #d8dade 60%, #f4f4f4 64%); }
.radio.on { background: radial-gradient(circle at 50% 50%, #8fd0ee 0, #3f9bcc 3px, #1d5688 5.500px, #1d568800 6.500px), #f2f2f2; }
.note { font-style: italic; height: 37px; line-height: 37px; font-stretch: 100%; letter-spacing: .1px; }
.support { margin: 2px 0 0 12px; width: 363px; height: 221px; border: 2px solid #c2d2e3; border-radius: 6px; }
.props > .form { height: 327px; }
.support .form { padding: 7px 0 0 4px; }
.support .head { display: flex; align-items: center; gap: 7px; }
.support .row { margin: 0; }
.n1 { margin-top: -3px; letter-spacing: .35px; }
.tall { margin-left: 0; width: 26px; padding: 10px 0 8px; }
.tall .thumb { margin: 9px 0 12px; }
.middle { margin: 4px 0 0; width: 451px; height: 897px; border: 2px solid #c2d2e3; border-radius: 6px; }
.pair { display: flex; gap: 6px; margin: 17px 0 0 20px; }
.prof { width: 203px; height: 154px; padding: 14px 0 0 7px; }
.plabel { height: 29px; line-height: 27px; }
.plabel.p2 { height: 32px; line-height: 33px; }
.pick { width: 188px; height: 34px; display: flex; line-height: 26px; gap: 13px; }
.field.pick { padding-left: 7px; }
.pick svg { width: 23px; height: 23px; margin-top: 1px; flex: none; }
.hot { background: #0078d7; width: 188px; height: 64px; font-weight: 700; letter-spacing: 0; }
.hot .field { font-weight: 400; letter-spacing: -.1px; }
.hot + .plabel { margin-top: -1px; }
.image { margin: 9px 0 0 12px; width: 430px; height: 333px; padding: 19px 0 0 63px; }
.image svg { display: block; }
.toothprops { margin: 10px 0 0 12px; width: 430px; height: 330px; padding: 20px 0 0 7px; }
.pgrid { width: 414px; height: 302px; border: 1px solid #9a9a9a; }
.cat { height: 28px; background: #f4f7fc; font-weight: 700; line-height: 32px; display: flex; letter-spacing: .1px; }
.cat svg { margin: 11px 10px 0 5px; }
.prow { display: flex; border-left: 21px solid #f4f7fc; height: 27px; line-height: 28px; }
.prow span { border: 0 solid #f0f4fa; border-width: 0 1px 1px 0; width: 144px; padding-left: 4px; letter-spacing: -.1px; }
.prow span + span { flex: 1; border-right: 0; padding-left: 3px; }
.prow.tint span:first-child { background: #f4f7fc; }
.faded { color: #777; }
.right { margin: 14px 0 0 5px; width: 757px; height: 885px; padding: 20px 0 0 7px; }
.right .cap { top: -9px; font-size: 16.500px; letter-spacing: .35px; left: 12px; }
.vis, .show { width: 742px; height: 74px; border: 2px solid #77a0d6; border-radius: 5px; display: flex; }
.right strong { color: #003a8c; font-size: 16px; letter-spacing: -.1px; }
.vis strong { width: 97px; text-align: center; line-height: 22px; padding-top: 14px; }
.nums { width: 637px; height: 66px; margin-top: 2px; border: 2px solid #7396c4; display: flex; }
.num { width: 57px; height: 60px; padding: 3px 4px 0; }
.num b { display: block; width: 48px; height: 54px; border: 3px solid #7da3d8; border-color: #b8d6fa #7fa8de #6690cc; border-radius: 7px; font-weight: 400; color: #0a1a80; text-align: center; line-height: 42px; background: linear-gradient(#eaf3ff 0 48%, #d2e1f5 52% 70%, #e5effb) 6px 4px / 30px 30px no-repeat; position: relative; }
.num b::after { content: ""; position: absolute; left: 6px; top: 4px; width: 30px; height: 30px; border: 1.500px solid #7b9bbf; border-radius: 3px; }
.num.cur { background: linear-gradient(#b59c82, #fbcf9c 8px, #f7bb78 30px, #f5a54e 32px, #fde08c); }
.num.cur b { border-color: #00007c; }
.num.last b { font-weight: 700; background-image: linear-gradient(#a3bbdc, #c3d4ea 48%, #a9c0e0 52%, #c8daf0); }
.show { height: 47px; margin-top: 7px; align-items: center; padding-left: 4px; }
.show strong { width: 99px; letter-spacing: 0; }
.show em { width: 62px; flex: none; overflow: hidden; margin: 3px 9px 0 6px; line-height: 26px; letter-spacing: 0; }
.red { color: #f00; }
.show em.red { margin-right: 4px; }
.inter { color: #0000f0; width: 153px; flex: none; letter-spacing: -.2px; }
.empty { background: linear-gradient(135deg, #c6c9ce, #f8f8f8); }
.chart { display: block; margin: 3px 0 0; }
.curve path { vector-effect: non-scaling-stroke; stroke-width: 1.1px; }
.status { margin-top: auto; height: 39px; border-top: 2px solid #688fc4; background: linear-gradient(#dfe9f6 0, #d3e1f1 15px, #b9cde6 16px, #c3d6ee); display: flex; justify-content: flex-end; }
.server { width: 364px; border-left: 2px solid #6d98d4; background: linear-gradient(#aecdf6 0, #8fb3e8 15px, #709bd8 17px, #87acdf); color: #15428b; display: flex; align-items: center; justify-content: flex-end; padding-right: 10px; gap: 4px; font-size: 17.500px; letter-spacing: -.1px; }
```
